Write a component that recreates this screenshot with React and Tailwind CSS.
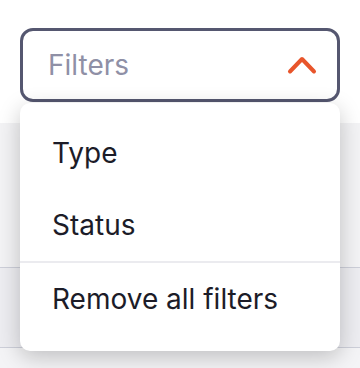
import React from "react";

export default function App() {
  return (
    <div className="relative w-[360px] h-[368px] overflow-hidden bg-white font-['Inter',sans-serif]">
      {/* page behind the menu */}
      <div className="flex flex-col h-full">
        <div className="h-[123px] bg-white" />
        <div className="h-[145px] bg-[#f3f3f5] border-b border-[#cdcfd9]" />
        <div className="h-[80px] bg-[#ededf1] border-b border-[#cdcfd9]" />
        <div className="flex-1 bg-[#f4f4f6]" />
      </div>

      {/* filter control */}
      <div className="absolute inset-x-0 top-0 px-5 pt-7">
        <button className="w-full h-[74px] flex items-center justify-between pl-[25px] pr-[20px] border-[3px] border-[#555770] rounded-[13px] bg-white">
          <span className="text-[28px] leading-none text-[#8f90a6]">Filters</span>
          <svg width="30" height="20" viewBox="0 0 30 20" fill="none">
            <polyline
              points="3,16.5 15,4 27,16.5"
              stroke="#e8552b"
              strokeWidth="4"
              strokeLinecap="round"
              strokeLinejoin="round"
            />
          </svg>
        </button>

        <div className="mt-px bg-white rounded-[10px] shadow-[0_6px_22px_rgba(0,0,0,0.22)] pt-[14px] pb-4">
          <div className="h-[72px] flex items-center px-8 text-[28px] leading-none text-[#1c1c28]">Type</div>
          <div className="h-[72px] flex items-center px-8 text-[28px] leading-none text-[#1c1c28]">Status</div>
          <div className="h-[2px] bg-[#ebebef]" />
          <div className="h-[72px] flex items-center px-8 text-[28px] leading-none text-[#1c1c28]">Remove all filters</div>
        </div>
      </div>
    </div>
  );
}
